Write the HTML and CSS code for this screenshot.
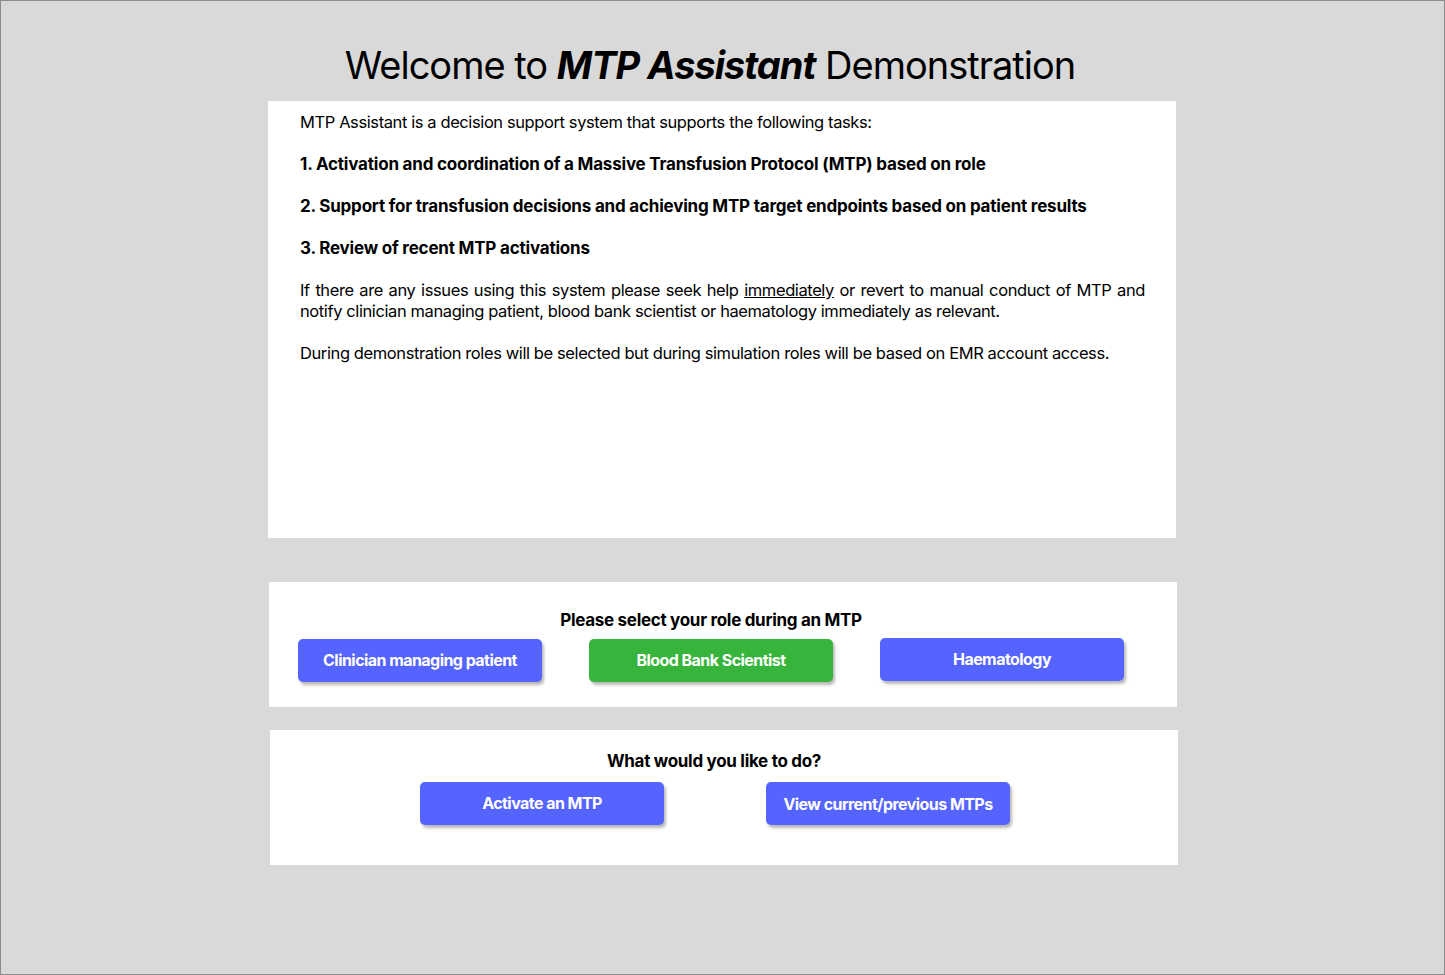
FILE: index.html
```html
<!DOCTYPE html>
<html lang="en">
<head>
<meta charset="utf-8">
<title>MTP Assistant Demonstration</title>
<link rel="stylesheet" href="styles.css">
</head>
<body>
<div class="frame">
  <h1 class="title">Welcome to <em>MTP Assistant</em> Demonstration</h1>
  <section class="panel intro">
    <p>MTP Assistant is a decision support system that supports the following tasks:</p>
    <p class="task">1. Activation and coordination of a Massive Transfusion Protocol (MTP) based on role</p>
    <p class="task">2. Support for transfusion decisions and achieving MTP target endpoints based on patient results</p>
    <p class="task">3. Review of recent MTP activations</p>
    <p>If there are any issues using this system please seek help <u>immediately</u> or revert to manual conduct of MTP and notify clinician managing patient, blood bank scientist or haematology immediately as relevant.</p>
    <p class="last">During demonstration roles will be selected but during simulation roles will be based on EMR account access.</p>
  </section>
  <section class="panel roles">
    <h2 class="panel-heading">Please select your role during an MTP</h2>
    <div class="btn-row roles-row">
      <button class="btn btn-blue">Clinician managing patient</button>
      <button class="btn btn-green">Blood Bank Scientist</button>
      <button class="btn btn-blue btn-raised">Haematology</button>
    </div>
  </section>
  <section class="panel actions">
    <h2 class="panel-heading">What would you like to do?</h2>
    <div class="btn-row actions-row">
      <button class="btn btn-blue">Activate an MTP</button>
      <button class="btn btn-blue btn-low">View current/previous MTPs</button>
    </div>
  </section>
</div>
</body>
</html>
```

FILE: styles.css
```css
* { box-sizing: border-box; }
html, body { margin: 0; padding: 0; }
body {
  font-family: Inter, "Noto Sans", "Liberation Sans", sans-serif;
  color: #000;
  background: #d9d9d9;
}
.frame {
  width: 1445px;
  height: 975px;
  border: 1px solid #8c8c8c;
  background: #d9d9d9;
  display: flex;
  flex-direction: column;
  align-items: center;
  padding-top: 41px;
}
.title {
  margin: 0 0 12px 0;
  font-size: 38px;
  line-height: 47px;
  font-weight: 400;
  letter-spacing: -1px;
  padding-right: 25px;
}
.title em { font-weight: 700; font-style: italic; }
.panel {
  width: 908px;
  background: #fff;
}
.intro {
  height: 437px;
  margin-left: -1px;
  padding: 11px 31px 0 32px;
  font-size: 16.5px;
  line-height: 21px;
  letter-spacing: -0.4px;
  text-align: justify;
}
.intro p { margin: 0 0 21px 0; }
.intro .task {
  font-size: 17px;
  font-weight: 700;
  letter-spacing: -0.2px;
  text-align: left;
}
.intro .last { text-align: left; }
.roles {
  margin-top: 44px;
  height: 125px;
  padding: 27px 24px 0 0;
  margin-left: 1px;
}
.actions {
  margin-top: 23px;
  height: 135px;
  padding: 20px 20px 0 0;
  margin-left: 3px;
}
.panel-heading {
  margin: 0;
  text-align: center;
  font-size: 17px;
  line-height: 22px;
  font-weight: 700;
  letter-spacing: -0.3px;
}
.btn-row {
  display: flex;
  justify-content: center;
  align-items: flex-start;
}
.roles-row { gap: 47px; margin-top: 8px; }
.actions-row { gap: 102px; margin-top: 10px; padding-left: 2px; }
.btn {
  width: 244px;
  height: 43px;
  border: 0;
  border-radius: 5px;
  color: #fff;
  font-family: Inter, "Noto Sans", "Liberation Sans", sans-serif;
  font-size: 16px;
  font-weight: 700;
  letter-spacing: -0.55px;
  box-shadow: 2px 3px 3px rgba(0,0,0,0.28);
  cursor: pointer;
  padding: 0 0 1px 0;
}
.btn-blue { background: #5563ff; }
.btn-green { background: #36b43c; }
.btn-raised { margin-top: -1px; }
.btn-low { padding-top: 2px; }
```
